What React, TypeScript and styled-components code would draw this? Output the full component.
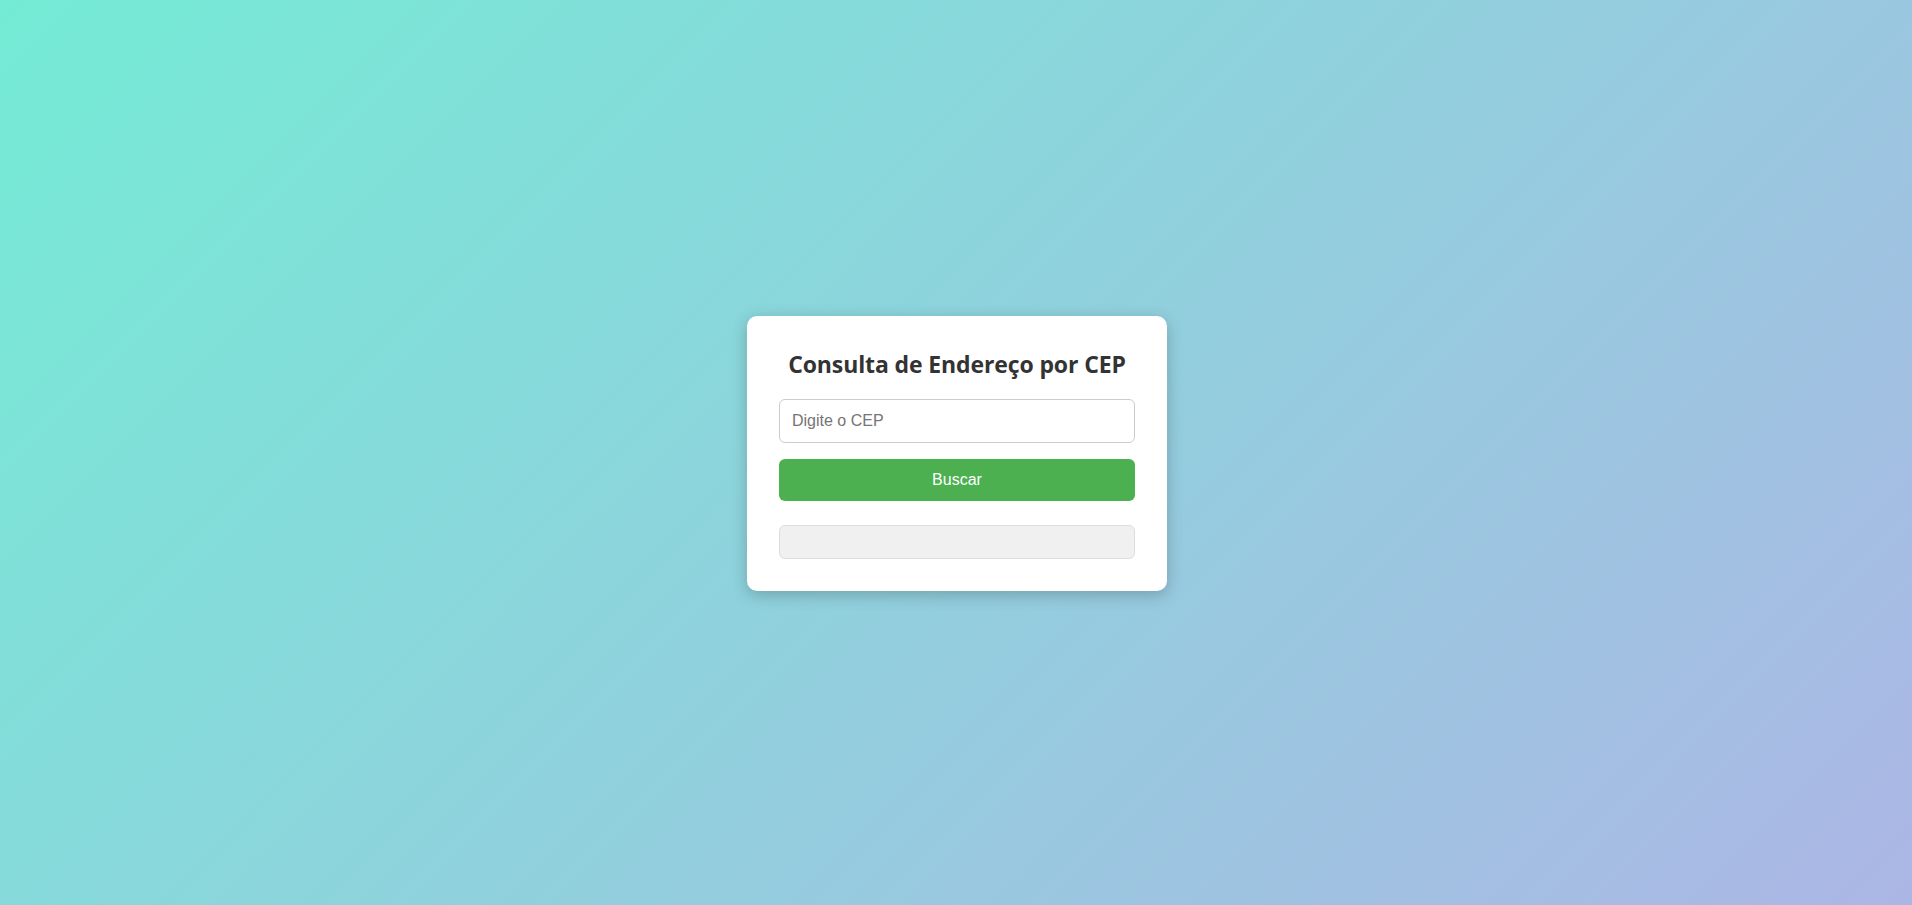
import React from "react";
import styled, { createGlobalStyle } from "styled-components";

const Global = createGlobalStyle`
  * { box-sizing: border-box; }
  html, body { margin: 0; padding: 0; height: 100%; }
  body {
    font-family: "Liberation Sans", Arial, sans-serif;
    background: linear-gradient(135deg, #74ebd5, #acb6e5);
    min-height: 905px;
  }
`;

const Page = styled.main`
  height: 905px;
  padding: 2px 0 0 2px;
  display: flex;
  align-items: center;
  justify-content: center;
`;

const Card = styled.section`
  width: 420px;
  background: #fff;
  border-radius: 10px;
  padding: 32px;
  box-shadow: 0 4px 16px rgba(0, 0, 0, 0.22);
  display: flex;
  flex-direction: column;
`;

const Title = styled.h2`
  margin: 0 0 19px;
  font-family: "Open Sans", "Noto Sans", sans-serif;
  font-weight: 700;
  font-size: 23px;
  line-height: 32px;
  letter-spacing: -0.12px;
  color: #333;
  text-align: center;
`;

const Input = styled.input`
  width: 100%;
  height: 44px;
  padding: 12px;
  border: 1px solid #ccc;
  border-radius: 6px;
  font-family: "Liberation Sans", Arial, sans-serif;
  font-size: 16px;
  color: #333;
  outline: none;
  margin: 0 0 16px;
  &::placeholder { color: #757575; }
`;

const Button = styled.button`
  width: 100%;
  height: 42px;
  border: none;
  border-radius: 6px;
  background: #4caf50;
  color: #fff;
  font-family: "Liberation Sans", Arial, sans-serif;
  font-size: 16px;
  cursor: pointer;
`;

const Result = styled.div`
  margin-top: 24px;
  height: 34px;
  padding: 16px;
  background: #f0f0f0;
  border: 1px solid #ddd;
  border-radius: 6px;
`;

export default function App() {
  return (
    <>
      <Global />
      <Page>
        <Card>
          <Title>Consulta de Endereço por CEP</Title>
          <Input type="text" placeholder="Digite o CEP" />
          <Button>Buscar</Button>
          <Result />
        </Card>
      </Page>
    </>
  );
}
